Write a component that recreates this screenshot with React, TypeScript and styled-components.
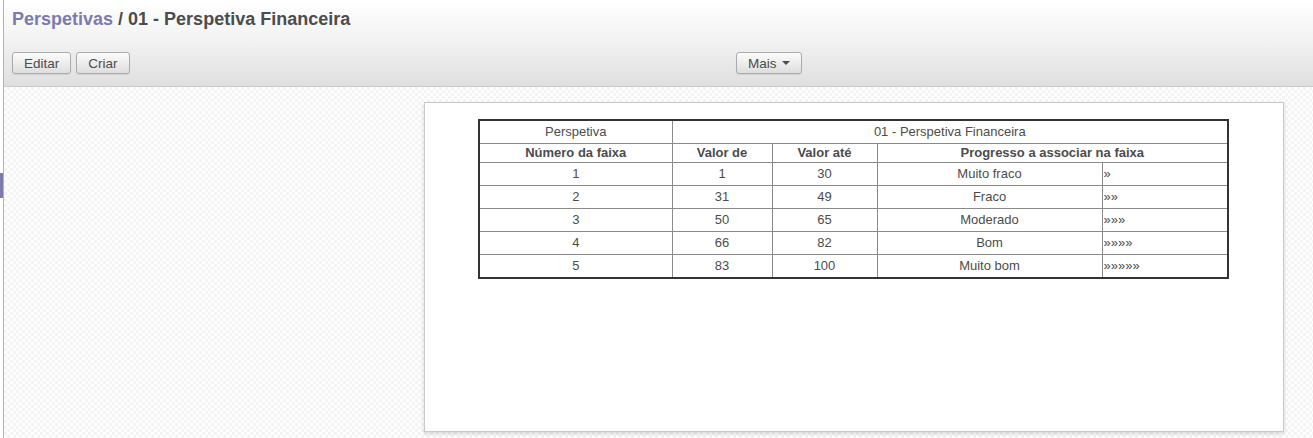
import React from "react";
import styled, { createGlobalStyle } from "styled-components";

const Global = createGlobalStyle`
  html, body { margin: 0; padding: 0; }
  body {
    font-family: "Liberation Sans", Arial, sans-serif;
    font-size: 13px;
    color: #4c4c4c;
    background: #fff;
  }
`;

const Shell = styled.div`
  position: relative;
  height: 438px;
  padding-left: 3px;
  overflow: hidden;
`;

const Indicator = styled.div`
  position: absolute;
  left: 0;
  top: 173px;
  width: 3px;
  height: 25px;
  background: #7c7bad;
`;

const Main = styled.div`
  height: 100%;
  border-left: 1px solid #b4b4b4;
  display: flex;
  flex-direction: column;
`;

const Header = styled.div`
  height: 86px;
  border-bottom: 1px solid #cacaca;
  background: linear-gradient(to bottom, #ffffff 0%, #f3f3f3 45%, #dfdfdf 100%);
  display: flex;
  flex-direction: column;
`;

const Title = styled.h2`
  margin: 0;
  padding: 9px 0 0 8px;
  font-size: 18px;
  line-height: 20px;
  font-weight: bold;
  color: #4c4c4c;
`;

const Crumb = styled.span`
  color: #7c7bad;
`;

const Toolbar = styled.div`
  display: flex;
  align-items: center;
  margin-top: 23px;
  padding-left: 8px;
`;

const LeftGroup = styled.div`
  display: flex;
  gap: 5px;
  width: 724px;
`;

const Button = styled.button<{ $pad?: number }>`
  height: 22px;
  padding: 0 ${(p) => p.$pad ?? 11}px;
  border: 1px solid #ababab;
  border-radius: 3px;
  background: linear-gradient(to bottom, #fcfcfc, #dedede);
  box-shadow: 0 1px 1px rgba(0, 0, 0, 0.08);
  font-family: "Liberation Sans", Arial, sans-serif;
  font-size: 13.5px;
  color: #4c4c4c;
  display: inline-flex;
  align-items: center;
  gap: 5px;
  cursor: pointer;
`;

const Caret = styled.span`
  width: 0;
  height: 0;
  border-left: 4px solid transparent;
  border-right: 4px solid transparent;
  border-top: 4px solid #4c4c4c;
`;

const Content = styled.div`
  flex: 1;
  background-color: #ffffff;
  background-image:
    linear-gradient(45deg, #f4f4f4 25%, transparent 25%, transparent 75%, #f4f4f4 75%),
    linear-gradient(45deg, #f4f4f4 25%, transparent 25%, transparent 75%, #f4f4f4 75%);
  background-size: 6px 6px;
  background-position: 0 0, 3px 3px;
  display: flex;
  justify-content: flex-end;
  padding: 15px 29px 0 0;
`;

const Sheet = styled.div`
  box-sizing: border-box;
  width: 860px;
  height: 330px;
  background: #fff;
  border: 1px solid #c8c8c8;
  box-shadow: 0 2px 4px rgba(0, 0, 0, 0.15);
  padding: 16px 56px 0 53px;
`;

const Table = styled.table`
  width: 749px;
  border-collapse: collapse;
  border: 2px solid #333;
  table-layout: fixed;
  font-size: 13px;
  color: #4c4c4c;
`;

const Cell = styled.td<{ $align?: string; $bold?: boolean; $h?: number }>`
  border: 1px solid #8a8a8a;
  text-align: ${(p) => p.$align ?? "center"};
  font-weight: ${(p) => (p.$bold ? "bold" : "normal")};
  height: ${(p) => p.$h ?? 22}px;
  padding: 0 1px;
  vertical-align: middle;
  line-height: 14px;
  white-space: nowrap;
`;

const rows = [
  ["1", "1", "30", "Muito fraco", "»"],
  ["2", "31", "49", "Fraco", "»»"],
  ["3", "50", "65", "Moderado", "»»»"],
  ["4", "66", "82", "Bom", "»»»»"],
  ["5", "83", "100", "Muito bom", "»»»»»"],
];

export default function App() {
  return (
    <>
      <Global />
      <Shell>
        <Indicator />
        <Main>
          <Header>
            <Title>
              <Crumb>Perspetivas</Crumb> / 01 - Perspetiva Financeira
            </Title>
            <Toolbar>
              <LeftGroup>
                <Button $pad={11}>Editar</Button>
                <Button $pad={11}>Criar</Button>
              </LeftGroup>
              <Button $pad={11}>
                Mais <Caret />
              </Button>
            </Toolbar>
          </Header>
          <Content>
            <Sheet>
              <Table>
                <colgroup>
                  <col style={{ width: 193 }} />
                  <col style={{ width: 100 }} />
                  <col style={{ width: 105 }} />
                  <col style={{ width: 225 }} />
                  <col style={{ width: 126 }} />
                </colgroup>
                <tbody>
                  <tr>
                    <Cell $h={22}>Perspetiva</Cell>
                    <Cell colSpan={4} $h={22}>
                      01 - Perspetiva Financeira
                    </Cell>
                  </tr>
                  <tr>
                    <Cell $bold $h={18}>Número da faixa</Cell>
                    <Cell $bold $h={18}>Valor de</Cell>
                    <Cell $bold $h={18}>Valor até</Cell>
                    <Cell $bold colSpan={2} $h={18}>
                      Progresso a associar na faixa
                    </Cell>
                  </tr>
                  {rows.map((r) => (
                    <tr key={r[0]}>
                      <Cell>{r[0]}</Cell>
                      <Cell>{r[1]}</Cell>
                      <Cell>{r[2]}</Cell>
                      <Cell>{r[3]}</Cell>
                      <Cell $align="left">{r[4]}</Cell>
                    </tr>
                  ))}
                </tbody>
              </Table>
            </Sheet>
          </Content>
        </Main>
      </Shell>
    </>
  );
}
